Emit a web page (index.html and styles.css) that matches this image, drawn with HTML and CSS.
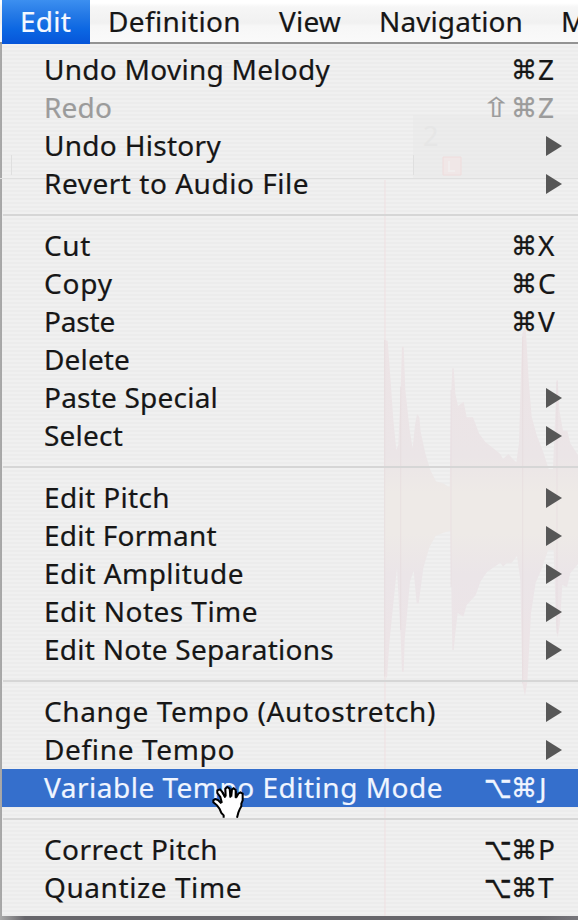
FILE: index.html
```html
<!DOCTYPE html>
<html lang="en">
<head>
<meta charset="utf-8">
<title>Edit menu</title>
<link rel="stylesheet" href="styles.css">
</head>
<body>
<div class="screen">
<nav class="menubar">
  <div class="tab active"><span data-w="51">Edit</span></div>
  <div class="tab"><span data-w="133">Definition</span></div>
  <div class="tab"><span data-w="62">View</span></div>
  <div class="tab"><span data-w="144">Navigation</span></div>
  <div class="tab"><span>M</span></div>
</nav>
<main class="menu">
  <svg class="ghost" viewBox="0 0 578 876" aria-hidden="true">
    <path d="M413 71H578V134H413Z" fill="#e6e6e6" opacity=".3"/>
    <path d="M0 134.500H578M413.500 111V131M11.500 111V131" stroke="#dfdfdf" fill="none"/>
    <text x="423" y="102" class="bar-number">2</text>
    <path d="M443 113H461V131H443Z" fill="#f0e7e7" stroke="#efdcdc"/>
    <path d="M449 117V127H455" fill="none" stroke="#f1eded" stroke-width="2"/>
    <path d="M385 136V872" stroke="#efdfe1"/>
    <g transform="translate(368 266) scale(.33333)">
      <defs><linearGradient id="wave" x1="0" y1="0" x2="0" y2="1">
        <stop offset="0" stop-color="#ede4e6"/><stop offset=".35" stop-color="#ebe5e7"/><stop offset=".45" stop-color="#eeeae7"/><stop offset=".56" stop-color="#eeeae7"/><stop offset=".67" stop-color="#ebe5e8"/><stop offset="1" stop-color="#ede4e6"/>
      </linearGradient></defs>
      <path fill="url(#wave)" d="M49 90L59 92L67 200L76 330L85 420L91 405L98 240L102 110H107L112 240L125 360L134 415L141 345L147 312L154 322L158 365L172 430L187 480L204 514L225 520L245 532L250 240L253 175H257L262 250L270 288L287 275L296 322L315 322L333 370L352 396L375 414L397 432L405 447L421 432L434 446L445 457L453 400L458 220L463 70L473 50L482 210L491 320L507 378L525 424L542 477H555L562 310L566 210H569L574 300L585 362H598L607 400L630 435V762L607 790L597 832L583 825L576 940L569 983L564 940L557 721H540L521 777L503 818L489 910L478 1115L471 1158L463 1120L457 810L447 738L430 760H416L405 770L397 758L357 786L338 814L323 856L296 885L286 920L269 909L262 970L257 1020H253L247 662L226 668L203 678L184 712L166 775L152 880L146 880L137 782L126 815L110 990L107 1085H102L98 980L87 775L74 900L64 1000L57 1105L49 1090Z"/>
      <path d="M50 90V1100M98 230V960M249 240V830M464 80V1120M567 215V970" class="onset"/>
    </g>
  </svg>
  <section class="group">
    <div class="item"><span class="label" data-w="286">Undo Moving Melody</span><span class="keys"><i></i><i class="cmd">⌘</i><b>Z</b></span></div>
    <div class="item off"><span class="label" data-w="68">Redo</span><span class="keys"><i class="shift">⇧</i><i class="cmd">⌘</i><b>Z</b></span></div>
    <div class="item"><span class="label" data-w="177">Undo History</span><span class="arrow"></span></div>
    <div class="item"><span class="label" data-w="265">Revert to Audio File</span><span class="arrow"></span></div>
  </section>
  <section class="group">
    <div class="item"><span class="label" data-w="47">Cut</span><span class="keys"><i></i><i class="cmd">⌘</i><b>X</b></span></div>
    <div class="item"><span class="label" data-w="69">Copy</span><span class="keys"><i></i><i class="cmd">⌘</i><b>C</b></span></div>
    <div class="item"><span class="label" data-w="71">Paste</span><span class="keys"><i></i><i class="cmd">⌘</i><b>V</b></span></div>
    <div class="item"><span class="label" data-w="86">Delete</span></div>
    <div class="item"><span class="label" data-w="174">Paste Special</span><span class="arrow"></span></div>
    <div class="item"><span class="label" data-w="79">Select</span><span class="arrow"></span></div>
  </section>
  <section class="group">
    <div class="item"><span class="label" data-w="126">Edit Pitch</span><span class="arrow"></span></div>
    <div class="item"><span class="label" data-w="173">Edit Formant</span><span class="arrow"></span></div>
    <div class="item"><span class="label" data-w="200">Edit Amplitude</span><span class="arrow"></span></div>
    <div class="item"><span class="label" data-w="214">Edit Notes Time</span><span class="arrow"></span></div>
    <div class="item"><span class="label" data-w="290">Edit Note Separations</span><span class="arrow"></span></div>
  </section>
  <section class="group">
    <div class="item"><span class="label" data-w="392">Change Tempo (Autostretch)</span><span class="arrow"></span></div>
    <div class="item"><span class="label" data-w="191">Define Tempo</span><span class="arrow"></span></div>
    <div class="item selected"><span class="label" data-w="399">Variable Tempo Editing Mode</span><span class="keys"><i class="opt">⌥</i><i class="cmd">⌘</i><b class="j">J</b></span></div>
  </section>
  <section class="group">
    <div class="item"><span class="label" data-w="174">Correct Pitch</span><span class="keys"><i class="opt">⌥</i><i class="cmd">⌘</i><b>P</b></span></div>
    <div class="item"><span class="label" data-w="198">Quantize Time</span><span class="keys"><i class="opt">⌥</i><i class="cmd">⌘</i><b>T</b></span></div>
  </section>
</main>
<svg class="hand" viewBox="90 60 110 104" aria-hidden="true">
  <path class="palm" d="M131 158V151L124 144L119 132L111 121L100 112V106L106 102L114 105L122 113L125 111L121 96L112 84V76L120 73L126 80L134 94L137 92L136 71L142 66L149 71L151 92H154L156 73L161 70L167 75V95H170L175 86L181 82L188 86V106L184 116V124L179 133L175 143L171 158"/>
  <path class="fingers" d="M128 82L136 98M151 75V98M168 78V100"/>
</svg>
</div>
<script src="fit.js"></script>
</body>
</html>
```
FILE: styles.css
```css
* { box-sizing: border-box; }
body { margin: 0; background: #626166; font-family: "Noto Sans", "Open Sans", sans-serif; font-size: 28px; color: #161616; }
.screen { position: relative; width: 578px; height: 920px; overflow: hidden; background: linear-gradient(90deg, #aaa, #66656a 25px, #66656a 540px, #77767b); }
.menubar { display: flex; height: 44px; padding-left: 2px; border-bottom: 2px solid #939393; background: linear-gradient(#fff 0 3px, #f6f6f6 7px, #f1f1f1 23px, #f7f7f7 26px, #fafafa 42px); }
.tab { flex: none; height: 42px; line-height: 43px; padding: 0 20px 0 18px; white-space: pre; -webkit-text-stroke: .2px; }
.tab.active { width: 88px; height: 44px; color: #f4f8ff; background: linear-gradient(#3c8ff0, #2479e6 15px, #0b66e2 30px, #0655d9); }
.tab span, .label { display: inline-block; white-space: pre; }
.menu { position: relative; height: 872px; margin-left: 2px; padding-top: 7px; background: repeating-linear-gradient(#f0f0f0 0 2px, #ececec 2px 4px); }
.ghost { position: absolute; left: -2px; top: 0; width: 578px; height: 876px; }
.bar-number { font-size: 27px; fill: #e6e6e6; }
.onset { fill: none; stroke: #e2d4d8; stroke-width: 3; stroke-opacity: .45; }
.group { position: relative; }
.group + .group { margin-top: 11px; padding-top: 11px; border-top: 2px solid #d8d8d8; border-image: linear-gradient(90deg, transparent 2px, #d6d6d6 2px) 1; }
.item { position: relative; display: flex; justify-content: space-between; align-items: center; height: 38px; line-height: 36px; padding-left: 42px; -webkit-text-stroke: .2px; }
.item.off { color: #9b9b9b; }
.item.selected { color: #f0f5ff; background: #356fcc; }
.label { height: 38px; }
.arrow { margin-right: 16px; border-left: 16px solid #575757; border-top: 10px solid transparent; border-bottom: 10px solid transparent; }
.keys { display: grid; grid-template-columns: 25px 28px 40px; }
.keys i, .keys b { display: block; font-style: normal; font-weight: 400; height: 38px; }
.keys i { font-family: "DejaVu Sans", sans-serif; text-align: center; }
.keys .cmd { font-size: 26px; line-height: 38px; -webkit-text-stroke: .3px; }
.keys .opt { font-size: 24px; line-height: 38px; -webkit-text-stroke: .3px; transform: translateX(-1px) scaleY(1.3); }
.keys .shift { font-size: 27px; line-height: 37px; transform: translateX(-1px) scaleX(1.3); }
.keys .j { padding-left: 1px; }
.hand { position: absolute; left: 210px; top: 785px; width: 36.67px; height: 34.67px; }
.palm { fill: #fff; stroke: #000; stroke-width: 6; }
.fingers { fill: none; stroke: #000; stroke-width: 5; }
```
FILE: fit.js
```js
document.querySelectorAll('[data-w]').forEach(function (el) {
  var natural = el.getBoundingClientRect().width;
  var gap = (Number(el.dataset.w) - natural) / el.textContent.length;
  el.style.letterSpacing = gap.toFixed(3) + 'px';
});
```
